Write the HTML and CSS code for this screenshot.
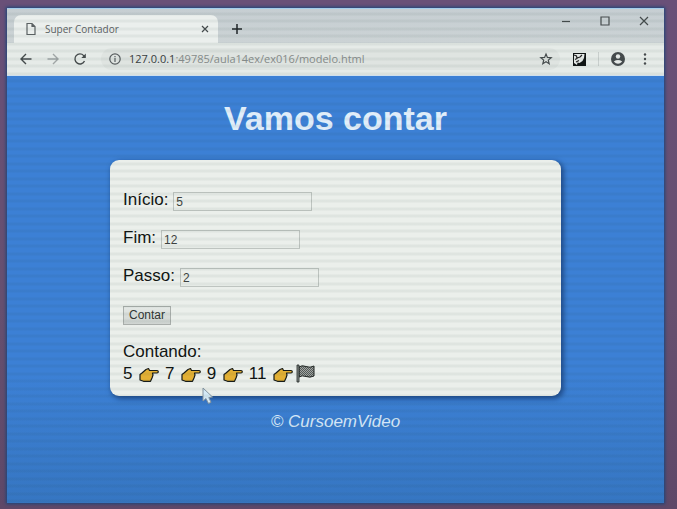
FILE: index.html
```html
<!DOCTYPE html>
<html lang="pt-BR">
<head>
<meta charset="utf-8">
<meta name="viewport" content="width=device-width, initial-scale=1">
<title>Super Contador</title>
<link rel="stylesheet" href="styles.css">
</head>
<body>
<svg class="symbols" aria-hidden="true">
  <symbol id="hand" viewBox="0 0 20 16">
    <path d="M1 7.500 3 6 7 2.500 9.500 1.500 10.500 3.500H18Q19.300 3.500 19.300 4.700T18 6H13.500L14 8 13 11 11.500 14.300H4.500L1 13Z" fill="#e3b034" stroke="#161a18" stroke-width="1.200" stroke-linejoin="round"/>
  </symbol>
</svg>
<div class="window">
  <header class="tabstrip">
    <div class="tab">
      <svg class="file" viewBox="0 0 10 12" aria-hidden="true"><path d="M1 .5H6L9 3.500V11.500H1ZM6 .5V3.500H9"/></svg>
      <span class="tab-title">Super Contador</span>
      <button class="plain close-tab" aria-label="Fechar guia"><svg viewBox="0 0 8 8"><path d="M1 1 7 7M7 1 1 7"/></svg></button>
    </div>
    <button class="plain new-tab" aria-label="Nova guia"><svg viewBox="0 0 12 12"><path d="M6 1V11M1 6H11"/></svg></button>
    <div class="controls">
      <button class="plain" aria-label="Minimizar"><svg viewBox="0 0 10 10"><path d="M1 5.500H9"/></svg></button>
      <button class="plain" aria-label="Maximizar"><svg viewBox="0 0 10 10"><path d="M1 1H9V9H1Z"/></svg></button>
      <button class="plain" aria-label="Fechar"><svg viewBox="0 0 10 10"><path d="M1 1 9 9M9 1 1 9"/></svg></button>
    </div>
  </header>
  <nav class="toolbar" aria-label="Navegação">
    <button class="plain nav" aria-label="Voltar"><svg viewBox="0 0 12 12"><path d="M11.500 6H1M6 1 1 6 6 11"/></svg></button>
    <button class="plain nav forward" aria-label="Avançar"><svg viewBox="0 0 12 12"><path d="M.5 6H11M6 1 11 6 6 11"/></svg></button>
    <button class="plain nav" aria-label="Recarregar"><svg viewBox="0 0 12 12"><path d="M10.500 8A5 5 0 1 1 9.700 2.600L10.800 4"/><path class="solid" d="M11.800.5V5H7.300Z"/></svg></button>
    <div class="address">
      <svg class="info" viewBox="0 0 12 12" aria-hidden="true"><circle cx="6" cy="6" r="5.200"/><path d="M6 5V9M6 3V4.200"/></svg>
      <span class="url"><b>127.0.0.1</b>:49785/aula14ex/ex016/modelo.html</span>
      <button class="plain star" aria-label="Favorito"><svg viewBox="0 0 12 12"><path d="M6 1 7.400 4.400 11.200 4.700 8.300 7.100 9.200 10.800 6 8.800 2.800 10.800 3.700 7.100.8 4.700 4.600 4.400Z"/></svg></button>
    </div>
    <button class="plain extension" aria-label="Extensão"><svg viewBox="0 0 13 13"><path class="black" d="M0 0H13V13H0Z"/><path class="white" d="M1 1H11.500L11 5 9.500 8 6.500 10 4.500 9.500 4 12 1 10Z"/><path d="M1 2 3.500 3 4 5.500 2 6.500M4 5 7 4 9 2M3 9 6 7.500" stroke="#222"/></svg></button>
    <button class="plain profile" aria-label="Perfil"><svg viewBox="0 0 14 14"><circle class="disc" cx="7" cy="7" r="7"/><circle class="white" cx="7" cy="4.500" r="2.200"/><path class="white" d="M2.800 9.500Q7 6.600 11.200 9.500Q7 14 2.800 9.500Z"/></svg></button>
    <button class="plain menu" aria-label="Menu"><svg viewBox="0 0 4 12"><circle class="disc" cx="2" cy="1.500" r="1.200"/><circle class="disc" cx="2" cy="6" r="1.200"/><circle class="disc" cx="2" cy="10.500" r="1.200"/></svg></button>
  </nav>
  <main class="page">
    <h1>Vamos contar</h1>
    <section class="card">
      <div class="row"><label for="inicio">Início:</label><input id="inicio" type="text" value="5"></div>
      <div class="row"><label for="fim">Fim:</label><input id="fim" type="text" value="12"></div>
      <div class="row"><label for="passo">Passo:</label><input id="passo" type="text" value="2"></div>
      <div class="row"><button class="count" type="button">Contar</button></div>
      <div class="result">Contando:<br>
        5 <svg class="hand" aria-hidden="true"><use href="#hand"/></svg>
        7 <svg class="hand" aria-hidden="true"><use href="#hand"/></svg>
        9 <svg class="hand" aria-hidden="true"><use href="#hand"/></svg>
        11 <svg class="hand" aria-hidden="true"><use href="#hand"/></svg><svg class="flag" viewBox="0 0 19 19" aria-hidden="true">
          <defs><pattern id="check" width="2" height="2" patternUnits="userSpaceOnUse"><path d="M0 0H2V2H0Z" fill="#a4a8a5"/><path d="M0 0H1V1H0ZM1 1H2V2H1Z" fill="#555957"/></pattern></defs>
          <path d="M3 3Q6 .8 10 2.500T18 2V12Q14 14 10 12.500T3 13Z" fill="url(#check)" stroke="#202422"/>
          <path d="M1 1H3V18H1Z" fill="#8b908d" stroke="#202422" stroke-width=".8"/>
        </svg>
      </div>
      <svg class="pointer" viewBox="0 0 12 18" aria-hidden="true"><path d="M1 1V14L4 11.500 6.500 16.500 9 15.300 6.800 10.600 10.500 10Z"/></svg>
    </section>
    <footer>© CursoemVideo</footer>
  </main>
</div>
</body>
</html>
```
FILE: styles.css
```css
* { box-sizing: border-box; }

body {
  margin: 0;
  min-height: 100vh;
  padding: 8px 13px 6px 7px;
  display: flex;
  background: linear-gradient(#695078, #66506f 60%, #5e4868);
  font-family: "Liberation Sans", Arial, sans-serif;
}

.symbols { position: absolute; width: 0; height: 0; }

.window {
  position: relative;
  flex: 1;
  min-width: 0;
  display: flex;
  flex-direction: column;
  background: #3c80d5;
  border-top: 1px solid #a5cdec;
  box-shadow: 0 0 3px 1px #1c4478;
}

/* Scan lines over the whole window */
.window::after {
  content: "";
  position: absolute;
  inset: 0;
  pointer-events: none;
  background: repeating-linear-gradient(rgba(30, 60, 50, 0) 0 3px, rgba(30, 60, 50, .06) 4px 6px, rgba(30, 60, 50, 0) 7px 10px, rgba(30, 60, 50, .06) 11px 13px, rgba(30, 60, 50, 0) 14px 15px);
}

.plain {
  display: flex;
  padding: 0;
  border: 0;
  background: none;
  color: #454b4c;
}

svg { flex: none; overflow: visible; }
.tabstrip svg, .toolbar svg { fill: none; stroke: currentColor; stroke-width: 1.2px; }

.tabstrip {
  display: flex;
  align-items: center;
  height: 34px;
  padding-left: 7px;
  background: linear-gradient(#c6ced2, #ccd3d5);
}

.tab {
  align-self: flex-end;
  display: flex;
  align-items: center;
  width: 204px;
  height: 28px;
  padding: 0 9px 0 12px;
  border-radius: 7px 7px 0 0;
  background: #ebefed;
  color: #5b6163;
}

.file { width: 10px; height: 12px; margin-right: 9px; }
.tab-title { flex: 1; font: 10px/16px "Open Sans", sans-serif; }
.close-tab svg { width: 8px; height: 8px; }
.new-tab { margin: 6px 0 0 13px; color: #202628; }
.new-tab svg { width: 12px; height: 12px; stroke-width: 1.5px; }

.controls {
  display: flex;
  gap: 29px;
  margin: 0 15px 10px auto;
}
.controls svg { width: 10px; height: 10px; }

.toolbar {
  display: flex;
  align-items: center;
  height: 32px;
  padding: 0 17px 0 13px;
  background: #e6ebe8;
}

.nav { margin-right: 15px; }
.nav svg { width: 12px; height: 12px; stroke-width: 1.4px; }
.forward { color: #a0a6a6; }

.address {
  flex: 1;
  min-width: 0;
  display: flex;
  align-items: center;
  height: 22px;
  padding: 0 8px;
  margin-right: 13px;
  border-radius: 11px;
  background: #dfe4e1;
}
.info { width: 12px; height: 12px; color: #575d5f; }
.url {
  flex: 1;
  min-width: 0;
  margin-left: 8px;
  overflow: hidden;
  white-space: nowrap;
  font: 11px/18px "Open Sans", sans-serif;
  color: #878c8b;
}
.url b { font-weight: 400; color: #383d3e; }
.star svg { width: 12px; height: 12px; }

.toolbar .solid { fill: currentColor; stroke: none; }
.toolbar .black { fill: #101414; stroke: none; }
.toolbar .white { fill: #e5e9e7; stroke: none; }
.toolbar .disc { fill: #454a4c; stroke: none; }

.extension svg { width: 13px; height: 13px; }
.profile { margin-left: 12px; padding-left: 12px; border-left: 1px solid #c9cfcd; }
.profile svg { width: 14px; height: 14px; }
.menu { margin-left: 18px; }
.menu svg { width: 4px; height: 12px; }

.page {
  flex: 1;
  padding: 22px 16px 0;
  border-top: 1px solid #d5e5f3;
  background: linear-gradient(#3c80d5 70%, #3676c2);
}

h1 {
  margin: 0 0 22px;
  text-align: center;
  font-size: 34px;
  line-height: 40px;
  color: #e0eefa;
}

.card {
  position: relative;
  max-width: 451px;
  margin: 0 auto;
  padding: 29px 13px 12px;
  border-radius: 9px;
  background: #ebefeb;
  box-shadow: 2px 2px 5px 1px rgba(10, 35, 80, .55);
  font-size: 17px;
  line-height: 22px;
  color: #101412;
}

.row {
  display: flex;
  align-items: center;
  gap: 5px;
  height: 22px;
  margin-bottom: 16px;
}

.row input {
  width: 139px;
  height: 19px;
  margin-top: 3px;
  padding: 0 2px;
  border: 1px solid #bec4c0;
  background: transparent;
  font: 12px/15px "Liberation Sans", Arial, sans-serif;
  color: #3d4240;
}

.count {
  width: 48px;
  height: 19px;
  margin-top: 2px;
  padding: 0;
  border: 1px solid #a9aeab;
  background: linear-gradient(#e4e8e5, #cfd4d1);
  font: 12px/15px "Liberation Sans", Arial, sans-serif;
  color: #303533;
}

.hand {
  width: 20px;
  height: 16px;
  margin: 0 1px 0 2px;
  vertical-align: -4px;
}

.flag {
  width: 19px;
  height: 19px;
  margin-left: 2px;
  vertical-align: -4px;
}

.result { height: 43px; }

.pointer {
  position: absolute;
  left: 92px;
  top: 227px;
  width: 12px;
  height: 18px;
  fill: #d4e9f6;
  stroke: #8796a2;
}

footer {
  margin-top: 15px;
  text-align: center;
  font-size: 17px;
  line-height: 22px;
  font-style: italic;
  color: #d5e7f8;
}
```
